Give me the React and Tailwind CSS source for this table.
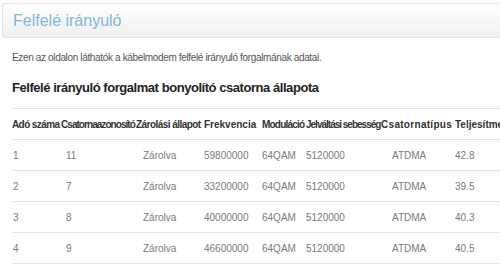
import React from "react";

const cols = [
  { w: "w-[49px]", off: "pl-[1px]", ht: "tracking-[-0.6px]" },
  { w: "w-[75px]", off: "pl-[5px]", ht: "tracking-[-0.95px]" },
  { w: "w-[68px]", off: "pl-[7px]", ht: "tracking-[-0.55px]" },
  { w: "w-[58px]", off: "pl-0", ht: "tracking-[0px]" },
  { w: "w-[44px]", off: "pl-0", ht: "tracking-[-0.8px]" },
  { w: "w-[75px]", off: "pl-0", ht: "tracking-[-1px]" },
  { w: "w-[74px]", off: "pl-[11px]", ht: "tracking-[0.3px]" },
  { w: "w-[60px]", off: "pl-0", ht: "tracking-[0px]" },
];

const headers = [
  "Adó száma",
  "Csatornaazonosító",
  "Zárolási állapot",
  "Frekvencia",
  "Moduláció",
  "Jelváltási sebesség",
  "Csatornatípus",
  "Teljesítmény",
];

const rows = [
  ["1", "11", "Zárolva", "59800000", "64QAM", "5120000", "ATDMA", "42.8"],
  ["2", "7", "Zárolva", "33200000", "64QAM", "5120000", "ATDMA", "39.5"],
  ["3", "8", "Zárolva", "40000000", "64QAM", "5120000", "ATDMA", "40.3"],
  ["4", "9", "Zárolva", "46600000", "64QAM", "5120000", "ATDMA", "40.5"],
];

export default function App() {
  return (
    <div
      className="w-[500px] h-[277px] overflow-hidden bg-white pt-[3px] pl-[2px]"
      style={{ fontFamily: '"Liberation Sans", Arial, sans-serif' }}
    >
      <div className="h-[35px] w-[520px] rounded-tl-[3px] border border-r-0 border-[#e4e4e4] bg-gradient-to-b from-white to-[#f0f0f0] flex items-center pl-[10px]">
        <span className="text-[16px] leading-none text-[#80b6d5]">Felfelé irányuló</span>
      </div>
      <div className="pl-[10px]">
        <p className="mt-[13px] text-[10px] leading-[14px] tracking-[-0.35px] text-[#555]">
          Ezen az oldalon láthatók a kábelmodem felfelé irányuló forgalmának adatai.
        </p>
        <h2 className="mt-[15px] text-[13px] leading-[16px] font-bold tracking-[-0.45px] text-[#222]">
          Felfelé irányuló forgalmat bonyolító csatorna állapota
        </h2>
        <div className="mt-[12px] w-[520px] border-t border-[#e3e3e3]">
          <div className="flex h-[31px] items-center border-b border-[#e3e3e3]">
            {headers.map((h, i) => (
              <div
                key={i}
                className={`${cols[i].w} ${cols[i].ht} shrink-0 whitespace-nowrap text-[10px] font-bold text-[#333]`}
              >
                {h}
              </div>
            ))}
          </div>
          {rows.map((r, ri) => (
            <div key={ri} className="flex h-[31px] items-center border-b border-[#e3e3e3]">
              {r.map((c, i) => (
                <div
                  key={i}
                  className={`${cols[i].w} ${cols[i].off} shrink-0 whitespace-nowrap text-[10px] text-[#7a7a7a]`}
                >
                  {c}
                </div>
              ))}
            </div>
          ))}
        </div>
      </div>
    </div>
  );
}
